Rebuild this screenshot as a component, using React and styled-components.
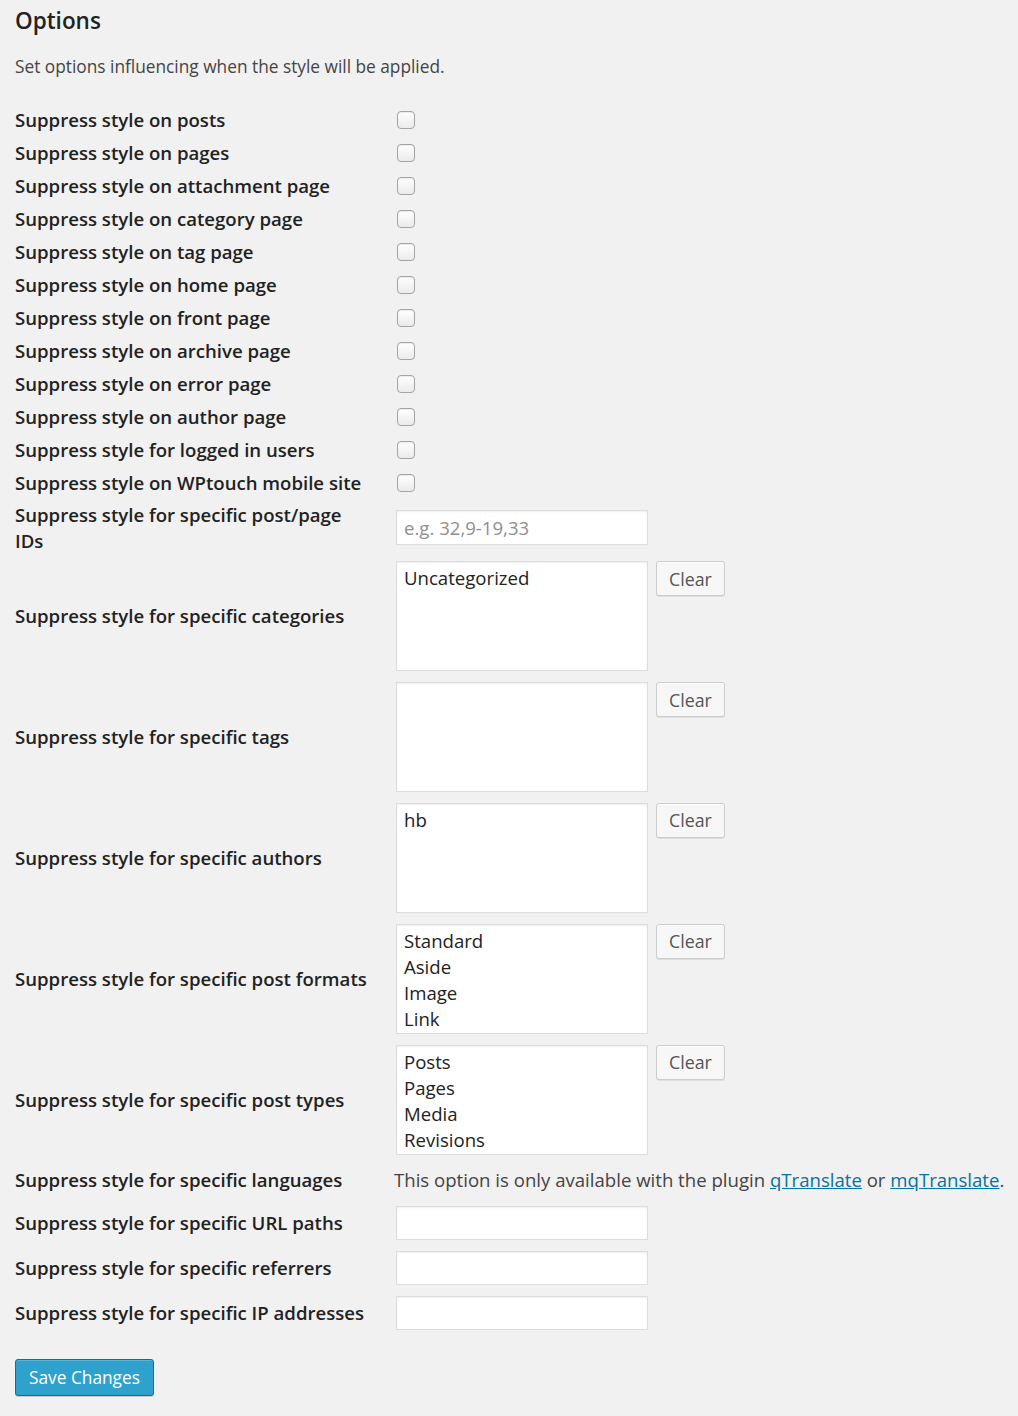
import styled, { createGlobalStyle } from "styled-components"

const GlobalStyle = createGlobalStyle`
  html, body {
    margin: 0;
    background: #f1f1f1;
  }
  body {
    font-family: "Open Sans", "Liberation Sans", sans-serif;
    color: #444;
  }
`

const checkboxOptions = [
  "Suppress style on posts",
  "Suppress style on pages",
  "Suppress style on attachment page",
  "Suppress style on category page",
  "Suppress style on tag page",
  "Suppress style on home page",
  "Suppress style on front page",
  "Suppress style on archive page",
  "Suppress style on error page",
  "Suppress style on author page",
  "Suppress style for logged in users",
  "Suppress style on WPtouch mobile site",
]

const selectOptions = [
  { label: "Suppress style for specific categories", items: ["Uncategorized"] },
  { label: "Suppress style for specific tags", items: [] },
  { label: "Suppress style for specific authors", items: ["hb"] },
  {
    label: "Suppress style for specific post formats",
    items: ["Standard", "Aside", "Image", "Link"],
  },
  {
    label: "Suppress style for specific post types",
    items: ["Posts", "Pages", "Media", "Revisions"],
  },
]

const textOptions = [
  "Suppress style for specific URL paths",
  "Suppress style for specific referrers",
  "Suppress style for specific IP addresses",
]

function App() {
  return (
    <>
      <GlobalStyle />
      <Wrapper>
        <Heading>Options</Heading>
        <Intro>Set options influencing when the style will be applied.</Intro>

        <Form>
          {checkboxOptions.map((label) => (
            <Row key={label} $pad={3.5}>
              <Label>{label}</Label>
              <Checkbox />
            </Row>
          ))}

          <Row $pad={2.5}>
            <Label>Suppress style for specific post/page IDs</Label>
            <TextInput $h={35} placeholder="e.g. 32,9-19,33" />
          </Row>

          {selectOptions.map((s) => (
            <Row key={s.label} $pad={5.4}>
              <Label>{s.label}</Label>
              <MultiSelect>
                {s.items.map((item) => (
                  <Option key={item}>{item}</Option>
                ))}
              </MultiSelect>
              <ClearButton>Clear</ClearButton>
            </Row>
          ))}

          <Row $pad={7.5}>
            <Label>Suppress style for specific languages</Label>
            <Note>
              This option is only available with the plugin{" "}
              <Link href="#">qTranslate</Link> or <Link href="#">mqTranslate</Link>.
            </Note>
          </Row>

          {textOptions.map((label) => (
            <Row key={label} $pad={5.5}>
              <Label>{label}</Label>
              <TextInput $h={34} />
            </Row>
          ))}
        </Form>

        <SaveButton>Save Changes</SaveButton>
      </Wrapper>
    </>
  )
}

export default App

const Wrapper = styled.div`
  padding: 7px 15px 20px;
  width: 1018px;
  box-sizing: border-box;
`

const Heading = styled.h2`
  margin: 0;
  font-size: 22.5px;
  line-height: 28px;
  font-weight: 600;
  color: #222;
`

const Intro = styled.p`
  margin: 19px 0 0;
  font-size: 17.3px;
  line-height: 26px;
  color: #444;
`

const Form = styled.div`
  margin-top: 23px;
  display: flex;
  flex-direction: column;
`

const Row = styled.div`
  display: flex;
  align-items: center;
  padding: ${({ $pad }) => $pad}px 0;
`

const Label = styled.div`
  flex: 0 0 381px;
  box-sizing: border-box;
  padding-right: 25px;
  font-size: 18.6px;
  line-height: 26px;
  font-weight: 600;
  color: #222;
`

const Checkbox = styled.span`
  display: block;
  width: 16px;
  height: 16px;
  margin: 1px 0 0 1px;
  border: 1px solid #a4a4a4;
  border-radius: 4px;
  background: linear-gradient(#ffffff, #ebebeb);
  box-shadow: inset 0 1px 1px rgba(0, 0, 0, 0.08);
`

const TextInput = styled.input`
  box-sizing: border-box;
  width: 252px;
  height: ${({ $h }) => $h}px;
  margin: 0;
  padding: 0 7px;
  border: 1px solid #dddddd;
  background: #fff;
  box-shadow: inset 0 1px 2px rgba(0, 0, 0, 0.07);
  font-family: "Open Sans", "Liberation Sans", sans-serif;
  font-size: 18.6px;
  color: #333;
  outline: none;

  &::placeholder {
    color: #8f8f8f;
  }
`

const MultiSelect = styled.div`
  box-sizing: border-box;
  width: 252px;
  height: 110px;
  padding: 3px 7px;
  border: 1px solid #dddddd;
  background: #fff;
  box-shadow: inset 0 1px 2px rgba(0, 0, 0, 0.07);
  overflow: hidden;
`

const Option = styled.div`
  font-size: 18.6px;
  line-height: 26px;
  color: #222;
`

const ClearButton = styled.button`
  align-self: flex-start;
  box-sizing: border-box;
  height: 35px;
  margin-left: 8px;
  padding: 0 12px;
  border: 1px solid #cccccc;
  border-radius: 3px;
  background: #f7f7f7;
  box-shadow: inset 0 1px 0 #fff, 0 1px 0 rgba(0, 0, 0, 0.08);
  font-family: "Open Sans", "Liberation Sans", sans-serif;
  font-size: 17.8px;
  color: #555;
`

const Note = styled.div`
  margin-left: -2px;
  font-size: 18.6px;
  line-height: 26px;
  color: #444;
  white-space: nowrap;
`

const Link = styled.a`
  color: #0074a2;
  text-decoration: underline;
`

const SaveButton = styled.button`
  display: block;
  box-sizing: border-box;
  margin-top: 23px;
  height: 37px;
  padding: 0 13px;
  border: 1px solid #0074a2;
  border-radius: 3px;
  background: #2ea2cc;
  box-shadow: inset 0 1px 0 rgba(120, 200, 230, 0.5), 0 1px 0 rgba(0, 0, 0, 0.15);
  font-family: "Open Sans", "Liberation Sans", sans-serif;
  font-size: 17.3px;
  color: #fff;
`
